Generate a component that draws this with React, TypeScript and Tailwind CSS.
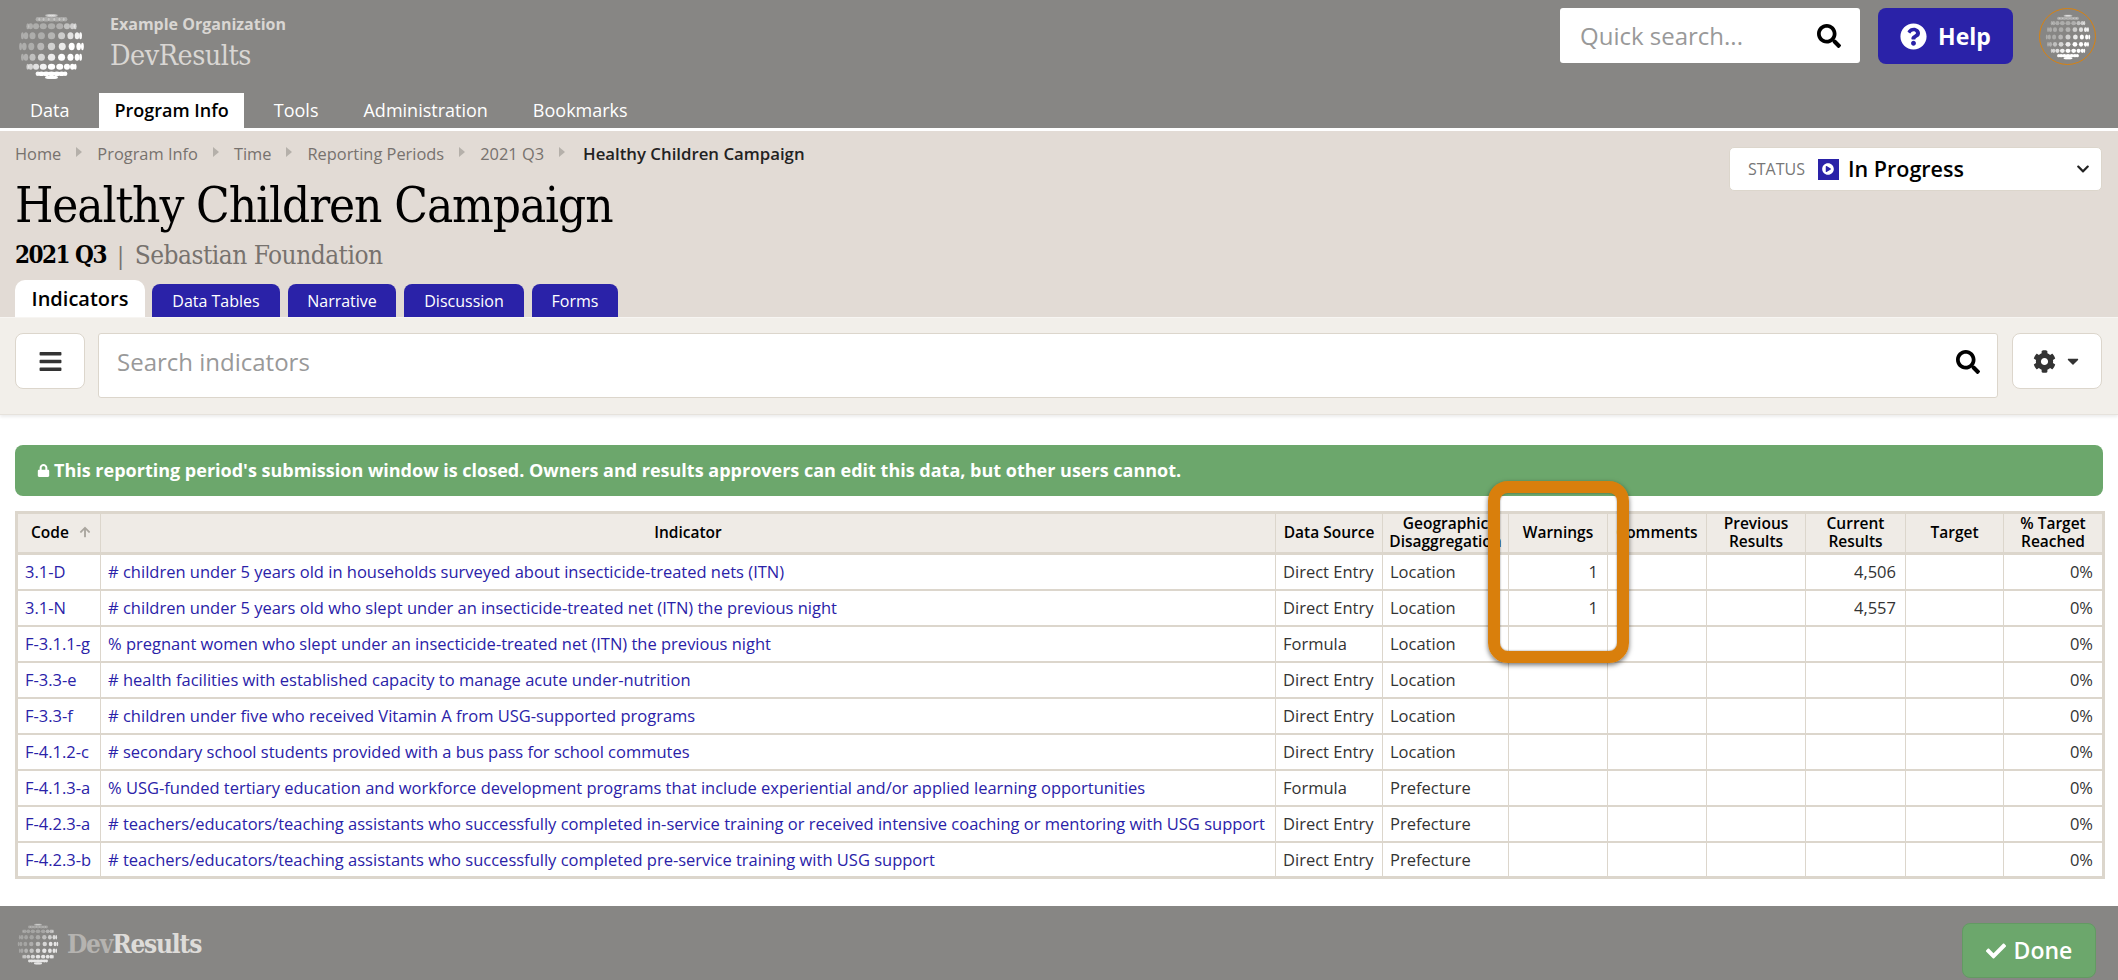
import React from 'react';
import { FaBars, FaCaretDown, FaCheck, FaChevronDown, FaCog, FaLock, FaPlayCircle, FaQuestionCircle, FaSearch, FaArrowUp } from 'react-icons/fa';

const slab = "font-['DejaVu_Serif_Condensed','DejaVu_Serif',serif]";

const navItems = ['Data', 'Program Info', 'Tools', 'Administration', 'Bookmarks'];
const crumbs = ['Home', 'Program Info', 'Time', 'Reporting Periods', '2021 Q3'];
const subTabs = [
  { name: 'Data Tables', width: 'w-[128px]' },
  { name: 'Narrative', width: 'w-[108px]' },
  { name: 'Discussion', width: 'w-[120px]' },
  { name: 'Forms', width: 'w-[86px]' },
];

const rows = [
  { code: '3.1-D', name: '# children under 5 years old in households surveyed about insecticide-treated nets (ITN)', source: 'Direct Entry', geo: 'Location', warnings: '1', current: '4,506' },
  { code: '3.1-N', name: '# children under 5 years old who slept under an insecticide-treated net (ITN) the previous night', source: 'Direct Entry', geo: 'Location', warnings: '1', current: '4,557' },
  { code: 'F-3.1.1-g', name: '% pregnant women who slept under an insecticide-treated net (ITN) the previous night', source: 'Formula', geo: 'Location' },
  { code: 'F-3.3-e', name: '# health facilities with established capacity to manage acute under-nutrition', source: 'Direct Entry', geo: 'Location' },
  { code: 'F-3.3-f', name: '# children under five who received Vitamin A from USG-supported programs', source: 'Direct Entry', geo: 'Location' },
  { code: 'F-4.1.2-c', name: '# secondary school students provided with a bus pass for school commutes', source: 'Direct Entry', geo: 'Location' },
  { code: 'F-4.1.3-a', name: '% USG-funded tertiary education and workforce development programs that include experiential and/or applied learning opportunities', source: 'Formula', geo: 'Prefecture' },
  { code: 'F-4.2.3-a', name: '# teachers/educators/teaching assistants who successfully completed in-service training or received intensive coaching or mentoring with USG support', source: 'Direct Entry', geo: 'Prefecture' },
  { code: 'F-4.2.3-b', name: '# teachers/educators/teaching assistants who successfully completed pre-service training with USG support', source: 'Direct Entry', geo: 'Prefecture' },
];

// dots on a sphere, getting brighter toward the lower right
const Globe = ({ className }: { className: string }) => {
  const dots: { x: number; y: number; rx: number; ry: number; o: number }[] = [];
  const step = (20 * Math.PI) / 180;
  for (let lat = -4; lat <= 4; lat++) {
    for (let lon = -4; lon <= 4; lon++) {
      const a = lat * step;
      const b = lon * step;
      const x = Math.sin(b) * Math.cos(a);
      const y = Math.sin(a);
      // poles collapse into one spot, keep fewer dots there
      if (Math.abs(lat) === 4 && Math.abs(lon) > 2) continue;
      if (Math.abs(lat) === 3 && Math.abs(lon) === 4) continue;
      const light = Math.max(0.32, Math.min(1, 0.62 + 0.62 * (x + y * 1.1)));
      dots.push({
        x: 32 + x * 30,
        y: 32 + y * 30,
        rx: 0.9 + Math.cos(b) * 2.6,
        ry: 0.9 + Math.cos(a) * 2.6,
        o: light,
      });
    }
  }
  return (
    <svg viewBox="0 0 64 64" className={className}>
      {dots.map((d, i) => (
        <ellipse key={i} cx={d.x} cy={d.y} rx={d.rx} ry={d.ry} fill="#fff" opacity={d.o} />
      ))}
    </svg>
  );
};

const App = () => {
  return (
    <div className="relative h-[980px] w-[2118px] overflow-hidden bg-white font-['Open_Sans',sans-serif] text-[16px] text-[#333]">
      {/* Top bar */}
      <header className="h-[131px] border-b-[3px] border-white bg-[#878684]">
        <div className="flex h-[93px] items-start">
          <Globe className="ml-[18px] mt-[13px] h-[67px] w-[67px]" />
          <div className="ml-[25px] mt-[13px] text-[#d9d6d3]">
            <div className="text-[16px] font-bold leading-[22px]">Example Organization</div>
            <div className={`${slab} mt-[3px] text-[28.5px] font-light leading-[36px] tracking-[-0.5px]`}>DevResults</div>
          </div>
          <div className="ml-auto mt-[8px] flex items-start">
            <div className="flex h-[55px] w-[300px] items-center justify-between rounded-[3px] bg-white pl-[20px] pr-[19px]">
              <span className="text-[24px] text-[#999]">Quick search...</span>
              <FaSearch className="h-[24px] w-[24px] text-black" />
            </div>
            <button className="ml-[18px] flex h-[56px] w-[135px] items-center justify-center gap-[11px] rounded-[8px] bg-[#2a22a8] text-[23px] font-bold text-white">
              <FaQuestionCircle className="h-[27px] w-[27px]" />
              Help
            </button>
            <div className="ml-[26px] mr-[22px] flex h-[57px] w-[57px] items-center justify-center rounded-full border border-[#d9820f]">
              <Globe className="h-[46px] w-[46px]" />
            </div>
          </div>
        </div>
        <nav className="flex h-[35px] pl-[15px]">
          {navItems.map((item) => (
            <a
              key={item}
              className={`mr-[15px] flex h-[35px] items-center px-[15px] text-[18px] ${
                item === 'Program Info' ? 'bg-white font-semibold text-black' : 'text-white'
              }`}
            >
              {item}
            </a>
          ))}
        </nav>
      </header>

      {/* Page title */}
      <section className="relative h-[187px] border-b border-[#f7f5f2] bg-[#e2dbd5] px-[15px]">
        <div className="flex h-[46px] items-center text-[16.4px] text-[#77726e]">
          {crumbs.map((c) => (
            <React.Fragment key={c}>
              <span>{c}</span>
              <span className="mx-[15px] mb-[4px] h-0 w-0 border-y-[5px] border-l-[6px] border-y-transparent border-l-[#b5b0aa]" />
            </React.Fragment>
          ))}
          <span className="ml-[3px] text-[16.8px] font-semibold text-[#222]">Healthy Children Campaign</span>
        </div>
        <h1 className={`${slab} text-[49px] leading-[58px] tracking-[-1.1px] text-black`}>Healthy Children Campaign</h1>
        <div className={`${slab} mt-[2px] flex h-[36px] items-center text-[26px] tracking-[-0.5px]`}>
          <span className="text-[24px] font-bold tracking-[-1.5px] text-black">2021 Q3</span>
          <span className="mx-[8px] font-['Open_Sans',sans-serif] text-[24px] text-[#77726e]">|</span>
          <span className="text-[#77726e]">Sebastian Foundation</span>
        </div>
        <div className="absolute bottom-0 left-[15px] flex items-end">
          <a className="flex h-[37px] w-[130px] items-center justify-center rounded-t-[10px] bg-white text-[20px] font-semibold text-black">Indicators</a>
          <div className="ml-[7px] flex gap-[8px]">
            {subTabs.map((t) => (
              <a key={t.name} className={`flex h-[33px] ${t.width} items-center justify-center rounded-t-[8px] bg-[#2a22a8] text-[16px] text-white`}>{t.name}</a>
            ))}
          </div>
        </div>
        {/* Status select */}
        <div className="absolute right-[16px] top-[16px] flex h-[44px] w-[373px] items-center rounded-[5px] border border-[#dcd6cc] bg-white pl-[18px] pr-[11px]">
          <span className="text-[16px] text-[#777]">STATUS</span>
          <span className="ml-[13px] flex h-[21px] w-[21px] items-center justify-center bg-[#2a22a8]">
            <FaPlayCircle className="h-[12px] w-[12px] text-white" />
          </span>
          <span className="ml-[9px] text-[21.5px] font-semibold text-black">In Progress</span>
          <FaChevronDown className="ml-auto h-[14px] w-[14px] text-[#222]" />
        </div>
      </section>

      {/* Toolbar */}
      <div className="flex h-[97px] items-start border-b border-[#e6e2dc] bg-[#f2efea] px-[15px] pt-[15px] shadow-[0_2px_3px_rgba(0,0,0,0.08)]">
        <button className="flex h-[56px] w-[70px] items-center justify-center rounded-[8px] border border-[#dcd6cc] bg-white">
          <FaBars className="h-[25px] w-[25px] text-[#333]" />
        </button>
        <div className="ml-[13px] flex h-[65px] w-[1900px] items-center justify-between rounded-[3px] border border-[#dcd6cc] bg-white pb-[8px] pl-[18px] pr-[17px]">
          <span className="text-[24px] text-[#999]">Search indicators</span>
          <FaSearch className="h-[24px] w-[24px] text-black" />
        </div>
        <button className="ml-[14px] flex h-[56px] w-[90px] items-center justify-center gap-[8px] rounded-[8px] border border-[#dcd6cc] bg-white text-[#333]">
          <FaCog className="h-[23px] w-[23px]" />
          <FaCaretDown className="h-[18px] w-[18px]" />
        </button>
      </div>

      {/* Content */}
      <main className="h-[491px] px-[15px] pt-[30px]">
        <div className="flex h-[51px] items-center rounded-[8px] bg-[#6ca76c] pl-[22px] text-[18px] font-bold text-white">
          <FaLock className="mr-[4px] h-[13px] w-[13px]" />
          This reporting period's submission window is closed. Owners and results approvers can edit this data, but other users cannot.
        </div>
        <table className="mt-[15px] w-[2087px] table-fixed border-collapse border-[3px] border-[#dcd6cc] text-[16.5px]">
          <colgroup>
            <col className="w-[84px]" />
            <col className="w-[1175px]" />
            <col className="w-[107px]" />
            <col className="w-[126px]" />
            <col className="w-[99px]" />
            <col className="w-[99px]" />
            <col className="w-[99px]" />
            <col className="w-[100px]" />
            <col className="w-[98px]" />
            <col className="w-[100px]" />
          </colgroup>
          <thead>
            <tr className="h-[41px] bg-[#efebe6] text-center text-[15.5px] font-semibold leading-[18px] text-black">
              <th className="border border-b-[3px] border-[#dcd6cc] pb-[2px] pl-[13px] text-left font-semibold">
                <span className="inline-flex items-center gap-[10px]">Code <FaArrowUp className="h-[12px] w-[12px] text-[#aaa69f]" /></span>
              </th>
              <th className="border border-b-[3px] border-[#dcd6cc] pb-[2px] font-semibold">Indicator</th>
              <th className="border border-b-[3px] border-[#dcd6cc] pb-[2px] font-semibold">Data Source</th>
              <th className="border border-b-[3px] border-[#dcd6cc] pb-[2px] font-semibold">Geographic<br />Disaggregation</th>
              <th className="border border-b-[3px] border-[#dcd6cc] pb-[2px] font-semibold">Warnings</th>
              <th className="border border-b-[3px] border-[#dcd6cc] pb-[2px] font-semibold">Comments</th>
              <th className="border border-b-[3px] border-[#dcd6cc] pb-[2px] font-semibold">Previous<br />Results</th>
              <th className="border border-b-[3px] border-[#dcd6cc] pb-[2px] font-semibold">Current<br />Results</th>
              <th className="border border-b-[3px] border-[#dcd6cc] pb-[2px] font-semibold">Target</th>
              <th className="border border-b-[3px] border-[#dcd6cc] pb-[2px] font-semibold">% Target<br />Reached</th>
            </tr>
          </thead>
          <tbody>
            {rows.map((r) => (
              <tr key={r.code} className="h-[36px] border-b-2 border-[#dcd6cc]">
                <td className="border-x border-[#dcd6cc] pl-[7px] pt-[2px] text-[#2a22a8]">{r.code}</td>
                <td className="whitespace-nowrap border-x border-[#dcd6cc] pl-[7px] pt-[2px] text-[#2a22a8]">{r.name}</td>
                <td className="border-x border-[#dcd6cc] pl-[7px] pt-[2px]">{r.source}</td>
                <td className="border-x border-[#dcd6cc] pl-[7px] pt-[2px]">{r.geo}</td>
                <td className="border-x border-[#dcd6cc] pr-[9px] pt-[2px] text-right">{r.warnings}</td>
                <td className="border-x border-[#dcd6cc]" />
                <td className="border-x border-[#dcd6cc]" />
                <td className="border-x border-[#dcd6cc] pr-[9px] pt-[2px] text-right">{r.current}</td>
                <td className="border-x border-[#dcd6cc]" />
                <td className="border-x border-[#dcd6cc] pr-[9px] pt-[2px] text-right">0%</td>
              </tr>
            ))}
          </tbody>
        </table>
      </main>

      {/* Footer */}
      <footer className="flex h-[75px] items-start justify-between border-b border-[#333] bg-[#878684] pl-[17px] pr-[22px]">
        <div className="mt-[17px] flex items-center">
          <Globe className="h-[42px] w-[42px] opacity-80" />
          <span className={`${slab} ml-[8px] text-[26px] font-bold tracking-[-1.2px]`}>
            <span className="text-[#b5b3b0]">Dev</span>
            <span className="text-[#dedcd9]">Results</span>
          </span>
        </div>
        <button className="mt-[17px] flex h-[55px] w-[134px] items-center justify-center gap-[8px] rounded-[8px] border border-[#639a63] bg-[#6ca76c] text-[23px] font-semibold text-white">
          <FaCheck className="h-[20px] w-[20px]" />
          Done
        </button>
      </footer>

      {/* Callout around the Warnings column */}
      <div className="absolute left-[1488px] top-[481px] h-[182px] w-[141px] rounded-[20px] border-[12px] border-[#d97f0c] shadow-[0_2px_5px_rgba(0,0,0,0.55),inset_0_0_2px_rgba(0,0,0,0.5)]" />
    </div>
  );
};

export default App;
